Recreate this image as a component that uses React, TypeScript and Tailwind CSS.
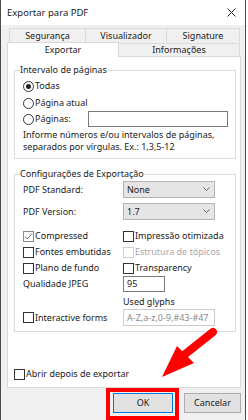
import React from 'react';

function Radio({ checked, label }: { checked?: boolean; label: string }) {
    return (
        <div className="flex items-center h-[16px]">
            <span className="w-[11px] h-[11px] rounded-full border border-[#333] bg-white flex items-center justify-center">
                {checked && <span className="w-[5px] h-[5px] rounded-full bg-[#222]" />}
            </span>
            <span className="ml-[1px]">{label}</span>
        </div>
    );
}

function Check({ label, checked, disabled }: { label: string; checked?: boolean; disabled?: boolean }) {
    return (
        <div className={`flex items-center h-[16px] whitespace-nowrap ${disabled ? 'text-[#a8a8a8]' : ''}`}>
            <span
                className={`w-[11px] h-[11px] shrink-0 border bg-white flex items-center justify-center ${
                    disabled ? 'border-[#cfcfcf]' : checked ? 'border-[#8a8a8a]' : 'border-[#333]'
                }`}
            >
                {checked && (
                    <svg width="9" height="9" viewBox="0 0 9 9">
                        <path d="M1 4.5 L3.5 7 L8 1.5" fill="none" stroke="#6b6b6b" strokeWidth="1" />
                    </svg>
                )}
            </span>
            <span className="ml-[1px]">{label}</span>
        </div>
    );
}

function Select({ value }: { value: string }) {
    return (
        <div className="w-[92px] h-[17px] bg-[#e5e5e5] border border-[#b4b4b4] flex items-center justify-between px-[3px]">
            <span>{value}</span>
            <svg width="7" height="5" viewBox="0 0 7 5" className="mr-[1px]">
                <path d="M0.5 0.5 L3.5 3.5 L6.5 0.5" fill="none" stroke="#666" strokeWidth="1" />
            </svg>
        </div>
    );
}

export default function App() {
    return (
        <div className="relative w-[248px] h-[420px] bg-white overflow-hidden font-['Noto_Sans',sans-serif] text-[9px] leading-[12px] text-[#1a1a1a]">
            <div className="w-[246px] h-[420px] border-l border-r border-[#4a4a4a] bg-[#f0f0f0] flex flex-col">
                {/* title bar */}
                <div className="h-[25px] bg-white flex items-center justify-between pl-[6px] pr-[9px] shrink-0">
                    <span className="text-[9.5px]">Exportar para PDF</span>
                    <svg width="9" height="9" viewBox="0 0 9 9">
                        <path d="M0.5 0.5 L8.5 8.5 M8.5 0.5 L0.5 8.5" stroke="#222" strokeWidth="1" />
                    </svg>
                </div>

                {/* tabs */}
                <div className="pt-[3px] pl-[8px] flex shrink-0">
                    <div className="w-[77px] h-[14px] border border-[#d9d9d9] border-b-0 flex items-center justify-center">Segurança</div>
                    <div className="w-[81px] h-[14px] border-t border-r border-[#d9d9d9] flex items-center justify-center">Visualizador</div>
                    <div className="w-[73px] h-[14px] border-t border-r border-[#d9d9d9] flex items-center justify-center">Signature</div>
                </div>
                <div className="pl-[6px] flex items-end shrink-0">
                    <div className="w-[112px] h-[15px] bg-white border border-[#d9d9d9] border-b-0 flex items-center justify-center relative z-10 -mb-px">Exportar</div>
                    <div className="w-[121px] h-[13px] border-t border-r border-[#d9d9d9] flex items-center justify-center">Informações</div>
                </div>

                {/* panel */}
                <div className="ml-[6px] w-[234px] h-[332px] bg-white border border-[#d9d9d9] flex flex-col px-[6px] pt-[7px] shrink-0">
                    <fieldset className="border border-[#dcdcdc] w-[222px] pl-[8px] pb-[5px]">
                        <legend className="ml-[-3px] h-[12px]">Intervalo de páginas</legend>
                        <div className="mt-[2px]">
                            <Radio checked label="Todas" />
                        </div>
                        <div className="mt-[1px]">
                            <Radio label="Página atual" />
                        </div>
                        <div className="flex items-center h-[16px]">
                            <div className="w-[65px]">
                                <Radio label="Páginas:" />
                            </div>
                            <div className="w-[140px] h-[16px] border border-[#7a7a7a] bg-white" />
                        </div>
                        <div className="mt-[2px] leading-[12px]">
                            Informe números e/ou intervalos de páginas,
                            <br />
                            separados por vírgulas. Ex.: 1,3,5-12
                        </div>
                    </fieldset>

                    <fieldset className="mt-[9px] border border-[#dcdcdc] w-[222px] pl-[8px] pb-[5px]">
                        <legend className="ml-[-3px] h-[12px]">Configurações de Exportação</legend>
                        <div className="mt-[1px] flex items-center h-[17px]">
                            <span className="w-[100px]">PDF Standard:</span>
                            <Select value="None" />
                        </div>
                        <div className="mt-[5px] flex items-center h-[17px]">
                            <span className="w-[100px]">PDF Version:</span>
                            <Select value="1.7" />
                        </div>
                        <div className="mt-[8px] grid grid-cols-[100px_1fr]">
                            <Check checked label="Compressed" />
                            <Check label="Impressão otimizada" />
                            <Check label="Fontes embutidas" />
                            <Check disabled label="Estrutura de tópicos" />
                            <Check label="Plano de fundo" />
                            <Check label="Transparency" />
                        </div>
                        <div className="flex items-center h-[16px]">
                            <span className="w-[100px]">Qualidade JPEG</span>
                            <div className="w-[42px] h-[16px] border border-[#7a7a7a] bg-white flex items-center px-[3px]">95</div>
                        </div>
                        <div className="mt-[3px] h-[14px] flex items-center pl-[100px]">Used glyphs</div>
                        <div className="flex items-center h-[17px]">
                            <div className="w-[100px]">
                                <Check label="Interactive forms" />
                            </div>
                            <div className="w-[92px] h-[17px] border border-[#cccccc] bg-white flex items-center px-[3px] text-[#8a8a8a] whitespace-nowrap overflow-hidden">
                                A-Z,a-z,0-9,#43-#47
                            </div>
                        </div>
                    </fieldset>

                    <div className="mt-auto mb-[5px]">
                        <Check label="Abrir depois de exportar" />
                    </div>
                </div>

                {/* buttons */}
                <div className="flex pl-[112px] pt-[5px] gap-[11px] shrink-0">
                    <button className="w-[60px] h-[20px] bg-[#e1e1e1] border border-[#0078d7] flex items-center justify-center">OK</button>
                    <button className="w-[57px] h-[20px] bg-[#e1e1e1] border border-[#adadad] flex items-center justify-center">Cancelar</button>
                </div>
            </div>

            {/* annotation overlay */}
            <div className="absolute left-[106px] top-[388px] w-[73px] h-[32px] border-4 border-[#ff0000]" />
            <svg className="absolute left-0 top-0" width="248" height="420" viewBox="0 0 248 420">
                <line x1="213" y1="332" x2="184" y2="355" stroke="#ff0000" strokeWidth="8" strokeLinecap="round" />
                <polygon points="162,377 177,346 194,363" fill="#ff0000" />
            </svg>
        </div>
    );
}
